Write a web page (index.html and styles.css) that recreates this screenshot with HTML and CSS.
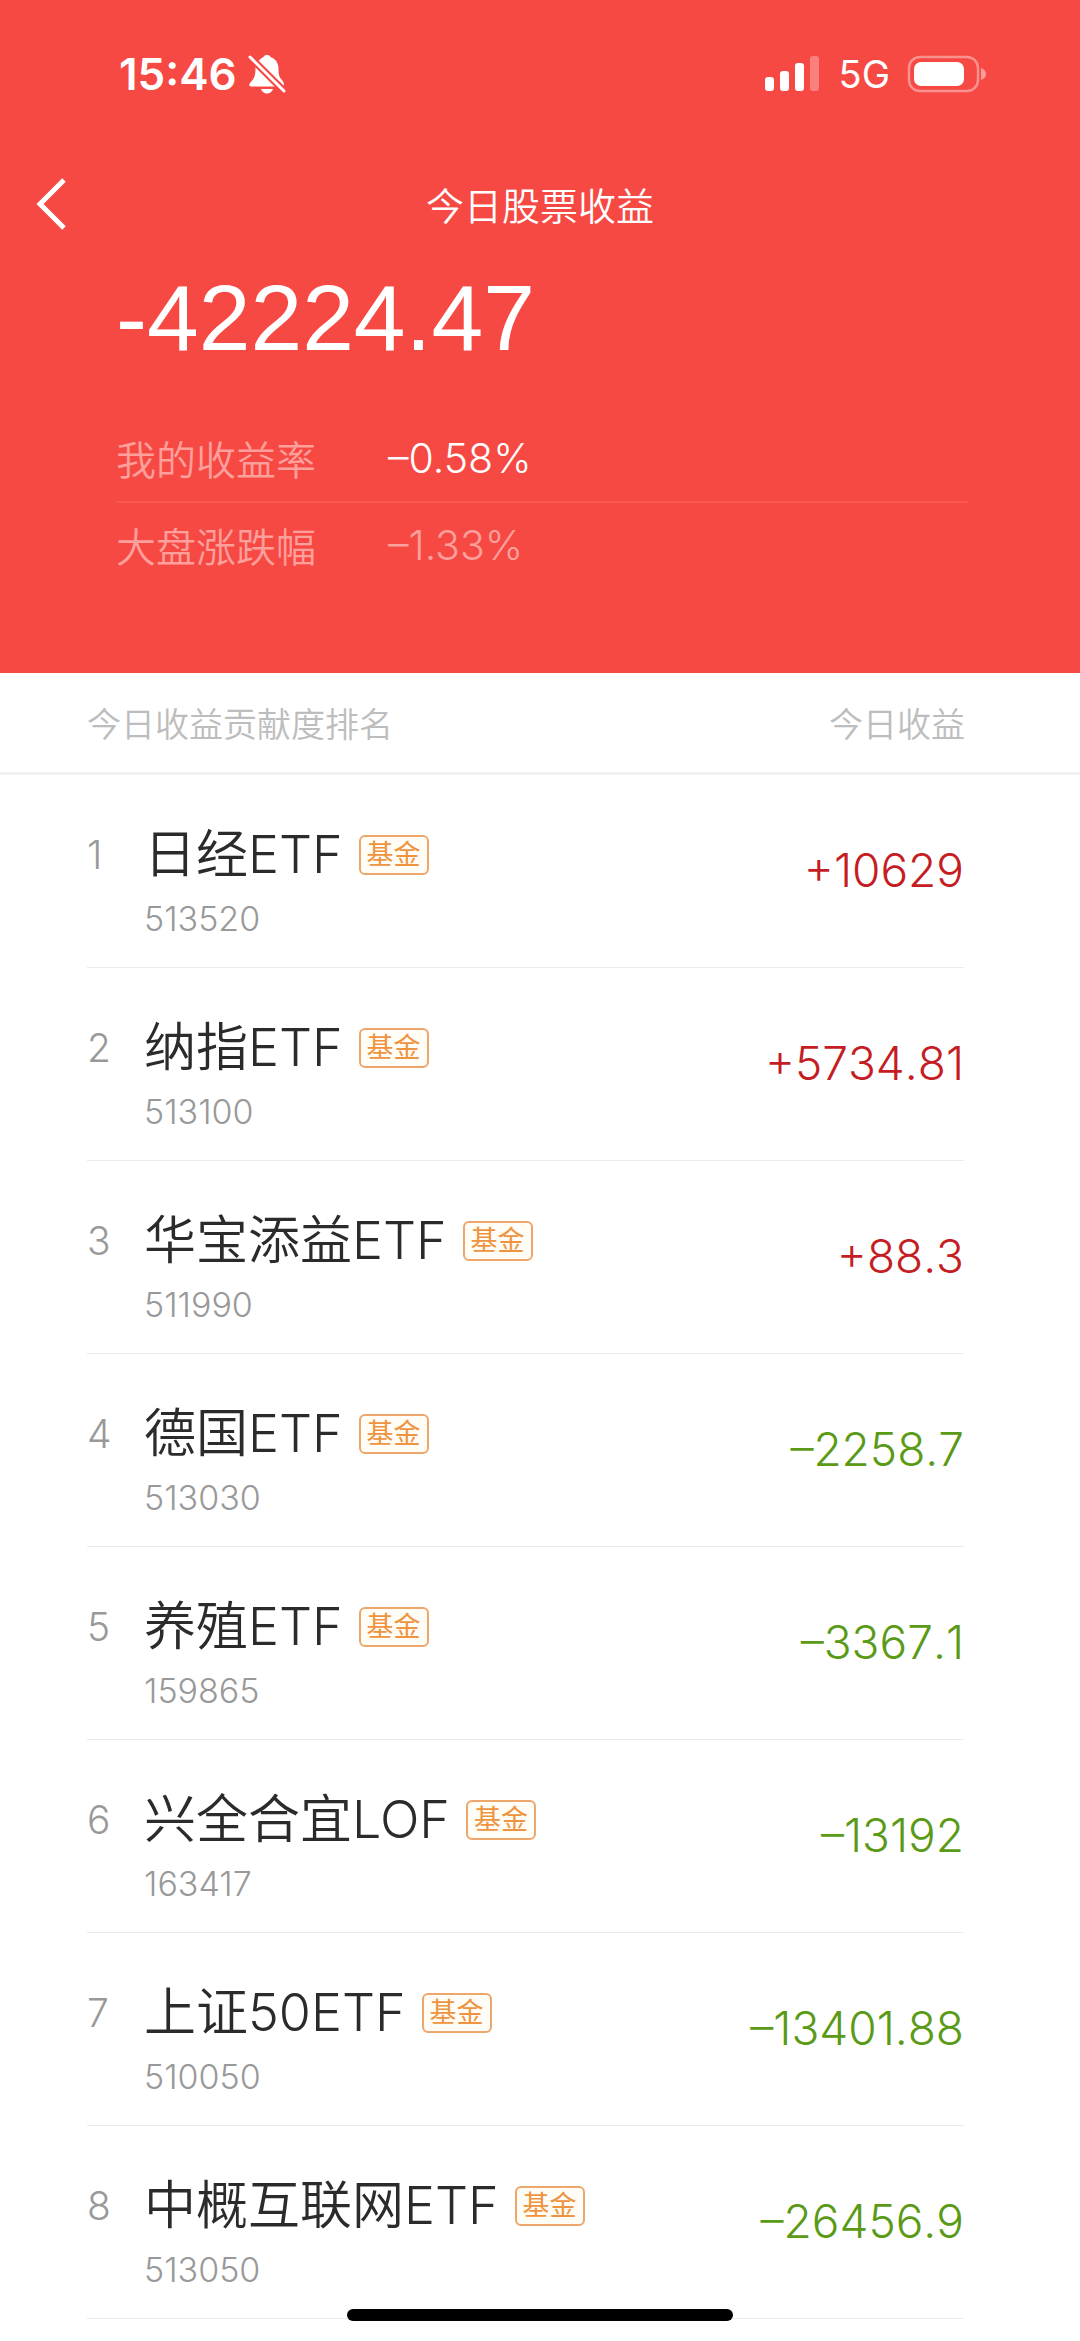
FILE: index.html
```html
<!DOCTYPE html>
<html lang="zh-CN">
<head>
<meta charset="utf-8">
<meta name="viewport" content="width=device-width, initial-scale=1">
<title>今日股票收益</title>
<link rel="stylesheet" href="styles.css">
</head>
<body>
<header class="hero">
  <div class="status">
    <div class="status-left">
      <span class="clock">15:46</span>
      <svg class="bell" viewBox="0 0 38 40" aria-hidden="true">
        <path fill="currentColor" d="M11 6.500C12.500 4.500 14.500 3.500 15.500 3C16 1.500 17.500 1 19 1C20.500 1 22 1.500 22.500 3C27.500 4.800 30.500 9 30.500 14.500C30.500 20 31 22.500 33.500 25.500C35.500 28 36.500 30 35.500 31.500C35 32.300 34.500 32.500 33.500 32.500H3C1.500 32.500 1 31.500 1.500 30C2 28.500 3.500 27.500 5 25.500C7.500 22 7.500 17 7.500 13C7.500 10.500 9 8 11 6.500ZM13 35H25C24 37.800 21.800 39.500 19 39.500C16.200 39.500 14 37.800 13 35Z"/>
        <path stroke="#f64944" stroke-width="7" d="M0 1L38 39"/>
        <path stroke="currentColor" stroke-width="3" stroke-linecap="round" d="M2 3L36 37"/>
      </svg>
    </div>
    <div class="status-right">
      <svg class="signal" viewBox="0 0 56 36" fill="currentColor" aria-hidden="true">
        <rect x="1" y="21" width="9" height="14" rx="3"/>
        <rect x="16" y="15" width="9" height="20" rx="3"/>
        <rect x="31" y="7" width="9" height="28" rx="3"/>
        <rect x="46" y="0" width="9" height="35" rx="3" opacity=".3"/>
      </svg>
      <span class="network">5G</span>
      <svg class="battery" viewBox="0 0 80 38" aria-hidden="true">
        <rect x="2" y="2" width="69" height="34" rx="11" fill="none" stroke="#fff" stroke-width="2.500" opacity=".4"/>
        <rect x="7" y="7" width="50" height="24" rx="7" fill="#fff"/>
        <path d="M74 13C77 14 79 16 79 19S77 24 74 25Z" fill="#fff" opacity=".45"/>
      </svg>
    </div>
  </div>
  <nav class="nav">
    <button class="back" type="button" aria-label="返回">
      <svg viewBox="0 0 32 54" fill="none" stroke="currentColor" stroke-width="5" aria-hidden="true"><path d="M30 3L6 27L30 51"/></svg>
    </button>
    <h1 class="title">今日股票收益</h1>
  </nav>
  <section class="summary">
    <p class="total">-42224.47</p>
    <dl class="rates">
      <div class="rate"><dt>我的收益率</dt><dd class="mine">–0.58%</dd></div>
      <div class="rate"><dt>大盘涨跌幅</dt><dd>–1.33%</dd></div>
    </dl>
  </section>
</header>
<main>
  <table class="ranking">
    <thead>
      <tr class="head"><th scope="col">今日收益贡献度排名</th><th scope="col">今日收益</th></tr>
    </thead>
    <tbody>
      <tr class="row"><td class="rank">1</td><td class="fund"><div class="name">日经ETF<span class="tag">基金</span></div><div class="code">513520</div></td><td class="amount up">+10629</td></tr>
      <tr class="row"><td class="rank">2</td><td class="fund"><div class="name">纳指ETF<span class="tag">基金</span></div><div class="code">513100</div></td><td class="amount up">+5734.81</td></tr>
      <tr class="row"><td class="rank">3</td><td class="fund"><div class="name">华宝添益ETF<span class="tag">基金</span></div><div class="code">511990</div></td><td class="amount up">+88.3</td></tr>
      <tr class="row"><td class="rank">4</td><td class="fund"><div class="name">德国ETF<span class="tag">基金</span></div><div class="code">513030</div></td><td class="amount down">–2258.7</td></tr>
      <tr class="row"><td class="rank">5</td><td class="fund"><div class="name">养殖ETF<span class="tag">基金</span></div><div class="code">159865</div></td><td class="amount down">–3367.1</td></tr>
      <tr class="row"><td class="rank">6</td><td class="fund"><div class="name">兴全合宜LOF<span class="tag">基金</span></div><div class="code">163417</div></td><td class="amount down">–13192</td></tr>
      <tr class="row"><td class="rank">7</td><td class="fund"><div class="name">上证50ETF<span class="tag">基金</span></div><div class="code">510050</div></td><td class="amount down">–13401.88</td></tr>
      <tr class="row"><td class="rank">8</td><td class="fund"><div class="name">中概互联网ETF<span class="tag">基金</span></div><div class="code">513050</div></td><td class="amount down">–26456.9</td></tr>
    </tbody>
  </table>
</main>
<div class="home-bar"></div>
</body>
</html>
```
FILE: styles.css
```css
* { box-sizing: border-box; }

body {
  margin: 0;
  background: #fff;
  color: #2b2b2b;
  font-family: Inter, "Noto Sans CJK SC", sans-serif;
  font-weight: 350;
}

h1, p, dl, dd { margin: 0; }
svg { display: block; }

/* Red summary area */
.hero {
  background: #f64944;
  color: #fff;
  padding-bottom: 86px;
}

.status {
  display: flex;
  justify-content: space-between;
  align-items: center;
  height: 148px;
  padding: 0 93px 0 119px;
}

.status-left, .status-right {
  display: flex;
  align-items: center;
}

.clock {
  font-size: 44px;
  line-height: 56px;
  font-weight: 600;
}

.bell { width: 38px; height: 40px; margin-left: 11px; }
.signal { width: 56px; height: 36px; }
.network { margin: 0 17px 0 19px; font-size: 38px; line-height: 48px; font-weight: 400; }
.battery { width: 80px; height: 38px; }

.nav {
  display: grid;
  grid-template-columns: 110px 1fr 110px;
  align-items: center;
  height: 112px;
}

.back {
  padding: 0 0 0 34px;
  border: 0;
  background: none;
  color: inherit;
}

.back svg { width: 32px; height: 54px; }

.title {
  padding-top: 4px;
  font-size: 38px;
  line-height: 56px;
  font-weight: 350;
  text-align: center;
}

.summary { padding: 0 112px 0 116px; }

.total {
  font-family: "Liberation Sans", Arial, sans-serif;
  font-size: 93px;
  line-height: 116px;
  font-weight: 400;
}

.rates { padding-top: 39px; }

.rate {
  display: flex;
  align-items: center;
  height: 86px;
  font-size: 40px;
  color: #fd9f9a;
}

.rate + .rate { border-top: 2px solid #f85752; }
.rate dt { width: 272px; }
.rate dd { font-size: 41px; }
.rate .mine { color: #fff; }

/* Contribution ranking */
.ranking, .ranking thead, .ranking tbody { display: block; }
.ranking th, .ranking td { padding: 0; text-align: left; }

.head {
  display: flex;
  justify-content: space-between;
  align-items: center;
  height: 102px;
  padding: 0 115px 0 87px;
  border-bottom: 3px solid #f2f2f2;
  color: #bdbdbd;
  font-size: 34px;
}

.head th { font-weight: 350; }

.ranking tbody { padding: 0 116px 0 87px; }

.row {
  display: flex;
  align-items: center;
  height: 193px;
  border-bottom: 1px solid #ebebeb;
}

.ranking .rank {
  width: 57px;
  padding-bottom: 32px;
  color: #999;
  font-size: 39px;
  line-height: 48px;
}

.ranking .fund { flex: 1; padding-top: 24px; }

.name {
  display: flex;
  align-items: center;
  gap: 16px;
  font-size: 52px;
  line-height: 72px;
}

.tag {
  border: 2px solid #eda66b;
  border-radius: 6px;
  padding: 0 6px;
  background: #fffdf5;
  color: #ee9440;
  font-size: 27px;
  line-height: 36px;
  font-weight: 400;
}

.code {
  color: #999;
  font-size: 34px;
  line-height: 56px;
}

.amount {
  font-size: 46px;
  line-height: 56px;
  font-kerning: none;
}
.ranking .amount { padding-bottom: 2px; }
.up { color: #c41d23; }
.down { color: #5a9a16; }

/* System home indicator, drawn over the page */
.home-bar {
  position: fixed;
  bottom: 20px;
  left: 50%;
  width: 386px;
  height: 12px;
  margin-left: -193px;
  border-radius: 6px;
  background: #000;
}
```
